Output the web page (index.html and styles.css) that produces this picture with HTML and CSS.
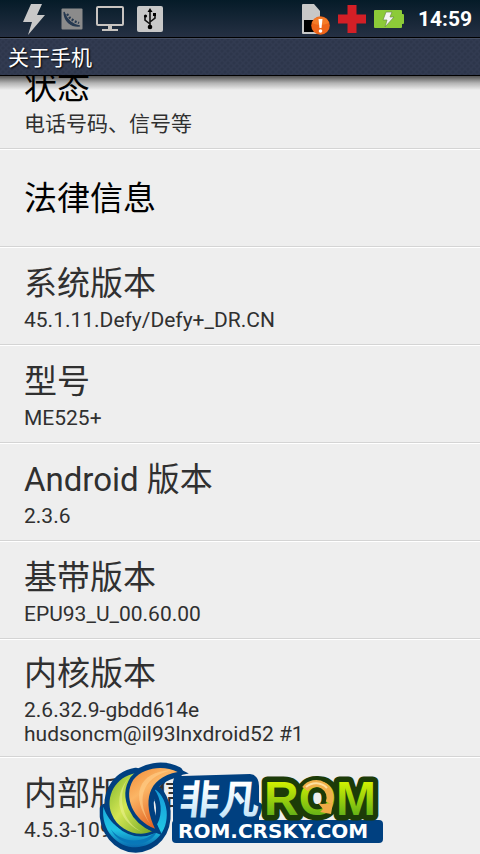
FILE: index.html
```html
<!DOCTYPE html>
<html lang="zh-CN">
<head>
<meta charset="utf-8">
<meta name="viewport" content="width=device-width, initial-scale=1">
<title>关于手机</title>
<link rel="stylesheet" href="styles.css">
</head>
<body>
<div class="status-bar">
  <div class="notifications">
    <svg class="bolt" width="26" height="32" viewBox="0 0 26 32" aria-hidden="true"><path d="M9 1H20L15 12H23L6 32L10 19H1Z" fill="#c8c8c8"/></svg>
    <svg class="app" width="22" height="22" viewBox="0 0 22 22" aria-hidden="true"><rect x=".5" y=".5" width="21" height="21" rx="1" fill="#8b8b8b"/><path d="M3 4C3 13 10 19 19 18C13 17 6 13 3 4Z" fill="#263950" stroke="#263950" stroke-width="1.2"/><path d="M6 6L9 10L13 13L18 15" fill="none" stroke="#263950" stroke-width="2.4" stroke-dasharray="2 1.600"/></svg>
    <svg class="monitor" width="28" height="27" viewBox="0 0 28 27" aria-hidden="true"><rect x="1" y="2" width="26" height="18" rx="1" fill="none" stroke="#c8c4c0" stroke-width="2"/><path d="M12 20H16V24H22V26H6V24H12Z" fill="#c8c4c0"/></svg>
    <svg class="usb" width="26" height="26" viewBox="0 0 26 26" aria-hidden="true"><rect width="26" height="26" rx="2" fill="#c8c8c8"/><path d="M13 20V5M13 18L8 14V10M13 16L18 12V8" fill="none" stroke="#111" stroke-width="1.6"/><path d="M10.500 6L13 2L15.500 6Z"/><circle cx="13" cy="21" r="2.300"/><circle cx="8.500" cy="10" r="1.600"/><path d="M16 7h3v3h-3z"/></svg>
  </div>
  <div class="system">
    <svg class="sim" width="28" height="32" viewBox="0 0 28 32" aria-hidden="true"><path d="M0 2Q0 1 1 1H12L18 8V31H1Q0 31 0 30Z" fill="#c8c8c8"/><rect x="2" y="17" width="13" height="12" fill="#000"/><circle cx="18.500" cy="22.500" r="9.300" fill="#ee6418"/><path d="M10 20A9 9 0 0 1 27 20Q18 24 10 20Z" fill="#fa8a32" opacity=".6"/><path d="M16.500 16H20.500L19.500 25H17.500Z" fill="#fff"/><circle cx="18.500" cy="28" r="1.800" fill="#fff"/></svg>
    <svg class="cross" width="28" height="28" viewBox="0 0 28 28" aria-hidden="true"><path d="M9.500 0H18.500V9.500H28V18.500H18.500V28H9.500V18.500H0V9.500H9.500Z" fill="#d31f26"/></svg>
    <svg class="battery" width="30" height="18" viewBox="0 0 30 18" aria-hidden="true"><path d="M1 0H27Q28 0 28 1V4H29Q30 4 30 5V13Q30 14 29 14H28V17Q28 18 27 18H1Q0 18 0 17V1Q0 0 1 0Z" fill="#8ccb38"/><path d="M12 2H18L16 7H20L11 17L13 10H9Z" fill="#f4f4f4" stroke="#6c8e45" stroke-width=".7"/></svg>
    <time class="clock">14:59</time>
  </div>
</div>
<header class="title-bar"><h1>关于手机</h1></header>
<main class="viewport">
  <ul class="settings">
    <li class="row active"><h2>状态</h2><p>电话号码、信号等</p></li>
    <li class="row active"><h2>法律信息</h2></li>
    <li class="row"><h2>系统版本</h2><p>45.1.11.Defy/Defy+_DR.CN</p></li>
    <li class="row"><h2>型号</h2><p>ME525+</p></li>
    <li class="row"><h2>Android 版本</h2><p>2.3.6</p></li>
    <li class="row"><h2>基带版本</h2><p>EPU93_U_00.60.00</p></li>
    <li class="row"><h2>内核版本</h2><p>2.6.32.9-gbdd614e<br>hudsoncm@il93lnxdroid52 #1</p></li>
    <li class="row"><h2>内部版本信息</h2><p>4.5.3-109</p></li>
  </ul>
</main>
<svg class="watermark" width="290" height="94" viewBox="0 0 290 94" role="img" aria-label="非凡ROM ROM.CRSKY.COM">
  <defs>
    <linearGradient id="lime" x1="0" y1="0" x2="0" y2="1"><stop offset=".15" stop-color="#d8f400"/><stop offset=".85" stop-color="#5fae18"/></linearGradient>
    <linearGradient id="ice" x1="0" y1="0" x2="0" y2="1"><stop offset=".3" stop-color="#fff"/><stop offset="1" stop-color="#b5def7"/></linearGradient>
    <linearGradient id="leaf" x1="0" y1="0" x2="1" y2="1"><stop offset="0" stop-color="#7fb52c"/><stop offset=".45" stop-color="#d3e654"/><stop offset="1" stop-color="#73a724"/></linearGradient>
    <linearGradient id="flame" x1="0" y1="0" x2=".6" y2="1"><stop offset="0" stop-color="#f08a35"/><stop offset=".4" stop-color="#fbb565"/><stop offset="1" stop-color="#df5919"/></linearGradient>
    <linearGradient id="sea" x1="0" y1="0" x2="0" y2="1"><stop offset="0" stop-color="#159ad8"/><stop offset=".7" stop-color="#20c3e3"/><stop offset="1" stop-color="#0868ad"/></linearGradient>
  </defs>
  <path d="M77 22Q78 14 86 16L154 14Q163 15 163 26V64H77Z" fill="#004080"/>
  <g transform="translate(-6 -6) scale(.3333)">
    <g fill="#004080" stroke="#004080" stroke-width="32" stroke-linejoin="round">
      <path d="M45 165C40 230 85 280 137 280C193 278 230 235 226 172C222 135 208 118 196 108C217 140 220 180 203 210C175 260 76 250 45 165Z"/>
      <path d="M138 57C75 68 47 130 65 178C85 228 145 248 186 232C120 200 102 115 138 57Z"/>
      <path d="M263 54C220 32 160 40 130 77C98 128 130 199 195 224C158 145 170 72 263 54Z"/>
    </g>
    <path d="M40 158C32 230 82 280 137 280C193 278 235 235 230 172C226 135 208 112 192 104C215 135 218 178 203 208C176 258 70 250 40 158Z" fill="url(#sea)"/>
    <path d="M62 225C95 270 165 272 205 225C183 284 92 287 62 225Z" fill="#0878b9"/>
    <path d="M138 57C75 68 45 130 65 180C85 230 145 252 186 232C120 200 102 115 138 57Z" fill="url(#leaf)" stroke="#004080" stroke-width="16" paint-order="stroke"/>
    <path d="M118 68C64 130 85 207 162 236C92 207 79 118 118 68Z" fill="#f0f399" opacity=".5"/>
    <path d="M263 54C220 32 160 40 130 77C98 128 130 199 195 224C158 145 170 72 263 54Z" fill="url(#flame)" stroke="#004080" stroke-width="22" paint-order="stroke"/>
    <path d="M243 49C145 52 118 127 182 212C140 146 148 72 243 49Z" fill="#ffd18c" opacity=".6"/>
  </g>
  <rect x="76" y="60" width="211" height="23" rx="4" fill="#004080"/>
  <text class="brand-cn" x="88" y="54" transform="skewX(-6)">非凡</text>
  <text class="brand-rom" x="168" y="55">ROM</text>
  <path d="M209 29A14 14 0 0 1 233 43" fill="none" stroke="#efb04a" stroke-width="7"/>
  <path d="M222 43L226 44L237 43L235 54L224 52L227 49Z" fill="#efaa45"/>
  <path d="M210 27A15 15 0 0 1 231 28" fill="none" stroke="#fde0a0" stroke-width="2"/>
  <text class="brand-url" x="82" y="78">ROM.CRSKY.COM</text>
</svg>
</body>
</html>
```
FILE: styles.css
```css
* { box-sizing: border-box; }
body {
  margin: 0;
  height: 100vh;
  display: flex;
  flex-direction: column;
  overflow: hidden;
  background: #eee;
  color: #303030;
  font-family: Roboto, "Noto Sans CJK SC", sans-serif;
}
h1, h2, p, ul { margin: 0; padding: 0; font-weight: 400; }
.status-bar {
  flex: none;
  height: 38px;
  padding: 0 8px 0 22px;
  display: flex;
  justify-content: space-between;
  align-items: center;
  background: linear-gradient(#051b28, #253043);
  border-bottom: 1px solid #000;
}
.notifications, .system { display: flex; align-items: center; }
.notifications { gap: 13px; }
.system { gap: 8px; }
.clock {
  margin-left: 6px;
  color: #fff;
  font-size: 21px;
  font-weight: 700;
  line-height: 24px;
}
.title-bar {
  flex: none;
  height: 38px;
  padding: 0 8px;
  display: flex;
  align-items: center;
  border-top: 1px solid #454e62;
  border-bottom: 1px solid #000;
  background:
    radial-gradient(circle, #2d364b 1px, transparent 2px) 0 0 / 6px 6px,
    radial-gradient(circle, #2d364b 1px, transparent 2px) 3px 3px / 6px 6px,
    #323b51;
}
.title-bar h1 {
  padding-top: 2px;
  color: #fff;
  font-size: 21px;
  line-height: 32px;
  text-shadow: 1px 1px 2px #000;
}
.viewport {
  flex: 1;
  min-height: 0;
  overflow: hidden;
  position: relative;
}
.viewport::before {
  content: "";
  position: absolute;
  inset: 0 0 auto;
  height: 14px;
  background: linear-gradient(rgba(0, 0, 0, .65), rgba(0, 0, 0, .25) 50%, transparent);
}
.settings { list-style: none; margin-top: -25px; }
.row {
  min-height: 98px;
  padding: 10px 24px;
  display: flex;
  flex-direction: column;
  justify-content: center;
  gap: 2px;
  border-top: 1px solid #fff;
  border-bottom: 1px solid #d4d4d4;
}
.row h2 { padding-top: 2px; font-size: 33px; line-height: 44px; }
.row p { font-size: 21px; line-height: 24px; }
.active h2 { color: #000; }
.watermark {
  position: absolute;
  left: 96px;
  bottom: 0;
}
.brand-cn {
  font: 700 40px "Noto Sans CJK SC", sans-serif;
  fill: url(#ice);
  stroke: #004080;
  stroke-width: 8px;
  stroke-linejoin: round;
  paint-order: stroke;
}
.brand-rom {
  font: 700 48px "Liberation Sans", sans-serif;
  fill: url(#lime);
  stroke: #1c3b08;
  stroke-width: 11px;
  stroke-linejoin: round;
  paint-order: stroke;
}
.brand-url {
  font: 700 20px "DejaVu Sans", sans-serif;
  fill: #fff;
}
```
